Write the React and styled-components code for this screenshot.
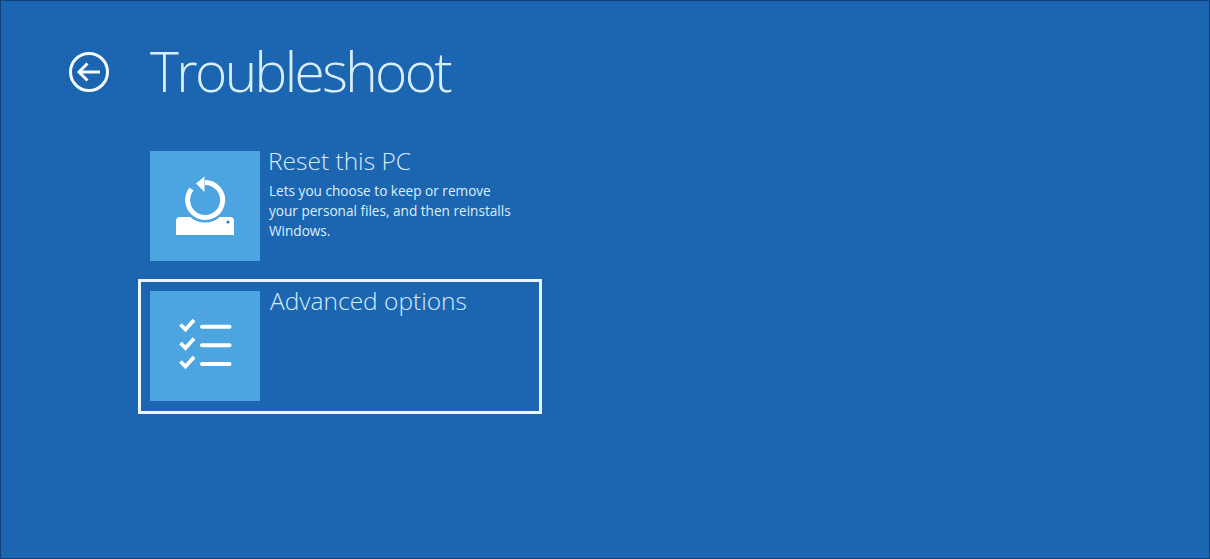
import React from "react";
import styled, { createGlobalStyle } from "styled-components";

const GlobalStyle = createGlobalStyle`
  html, body {
    margin: 0;
    padding: 0;
    height: 100%;
    background: #1c65b0;
  }
`;

const Screen = styled.div`
  height: 100vh;
  box-sizing: border-box;
  overflow: hidden;
  background: #1c65b0;
  box-shadow: inset 0 0 0 1px #12407c;
  color: #f2f9fe;
  font-family: "Open Sans", "Liberation Sans", sans-serif;
  font-weight: 300;
`;

const Header = styled.header`
  display: flex;
  align-items: center;
  gap: 41px;
  height: 134px;
  padding: 5px 0 0 69px;
`;

const BackButton = styled.div`
  display: flex;
  width: 40px;
  height: 40px;
`;

const Title = styled.h1`
  margin: -3px 0 0;
  font-size: 55px;
  font-weight: 300;
  line-height: 1;
  letter-spacing: -2.6px;
  color: #d9eefb;
`;

const OptionList = styled.div`
  display: flex;
  flex-direction: column;
  gap: 6px;
  width: 404px;
  margin-left: 138px;
`;

const Option = styled.div`
  display: flex;
  align-items: flex-start;
  gap: ${(props) => (props.$selected ? "11px" : "9px")};
  height: ${(props) => (props.$selected ? "135px" : "134px")};
  box-sizing: border-box;
  padding: 9px;
  border: 3px solid ${(props) => (props.$selected ? "#e8f6fd" : "transparent")};
`;

const Tile = styled.div`
  flex: none;
  display: flex;
  width: 110px;
  height: 110px;
  background: #4ca4e0;
`;

const OptionText = styled.div`
  min-width: 0;
`;

const OptionTitle = styled.div`
  margin: -5px 0 0 -1px;
  font-size: 24.5px;
  line-height: 30px;
  color: #d6ecfa;
`;

const OptionDescription = styled.div`
  width: 250px;
  margin-top: 5px;
  font-size: 13.6px;
  font-weight: 400;
  line-height: 20px;
  color: #dcf0fb;
`;

const BackIcon = () => (
  <svg width="40" height="40" viewBox="0 0 40 40" fill="none" stroke="#f4fbff">
    <circle cx="20" cy="20" r="18.5" strokeWidth="3" />
    <path d="M31 20H10.5M18.5 11.5L10 20l8.5 8.5" strokeWidth="3" />
  </svg>
);

const ResetIcon = () => (
  <svg width="110" height="110" viewBox="0 0 110 110" fill="none">
    <path d="M26 70a4 4 0 0 1 4-4h50a4 4 0 0 1 4 4v14H26z" fill="#fff" />
    <circle cx="78" cy="71" r="1.6" fill="#2f7fc0" />
    <circle cx="55" cy="49" r="17.5" stroke="#4ca4e0" strokeWidth="10" />
    <path d="M55 31.5A17.5 17.5 0 1 1 41.5 38" stroke="#fff" strokeWidth="5" />
    <path d="M46 32.5L54.5 25.5V41z" fill="#fff" />
  </svg>
);

const ChecklistIcon = () => (
  <svg
    width="110"
    height="110"
    viewBox="0 0 110 110"
    fill="none"
    stroke="#fff"
    strokeLinecap="round"
  >
    <g strokeWidth="4">
      <path d="M52 35.7H79.5" />
      <path d="M52 54.3H79.5" />
      <path d="M52 73H79.5" />
    </g>
    <g strokeWidth="3.8" strokeLinecap="butt">
      <path d="M30.5 33.5L35.5 38.5L44 29" />
      <path d="M30.5 52L35.5 57L44 47.5" />
      <path d="M30.5 70.5L35.5 75.5L44 66" />
    </g>
  </svg>
);

export default function App() {
  return (
    <Screen>
      <GlobalStyle />
      <Header>
        <BackButton>
          <BackIcon />
        </BackButton>
        <Title>Troubleshoot</Title>
      </Header>
      <OptionList>
        <Option>
          <Tile>
            <ResetIcon />
          </Tile>
          <OptionText>
            <OptionTitle>Reset this PC</OptionTitle>
            <OptionDescription>
              Lets you choose to keep or remove your personal files, and then
              reinstalls Windows.
            </OptionDescription>
          </OptionText>
        </Option>
        <Option $selected>
          <Tile>
            <ChecklistIcon />
          </Tile>
          <OptionText>
            <OptionTitle>Advanced options</OptionTitle>
          </OptionText>
        </Option>
      </OptionList>
    </Screen>
  );
}
